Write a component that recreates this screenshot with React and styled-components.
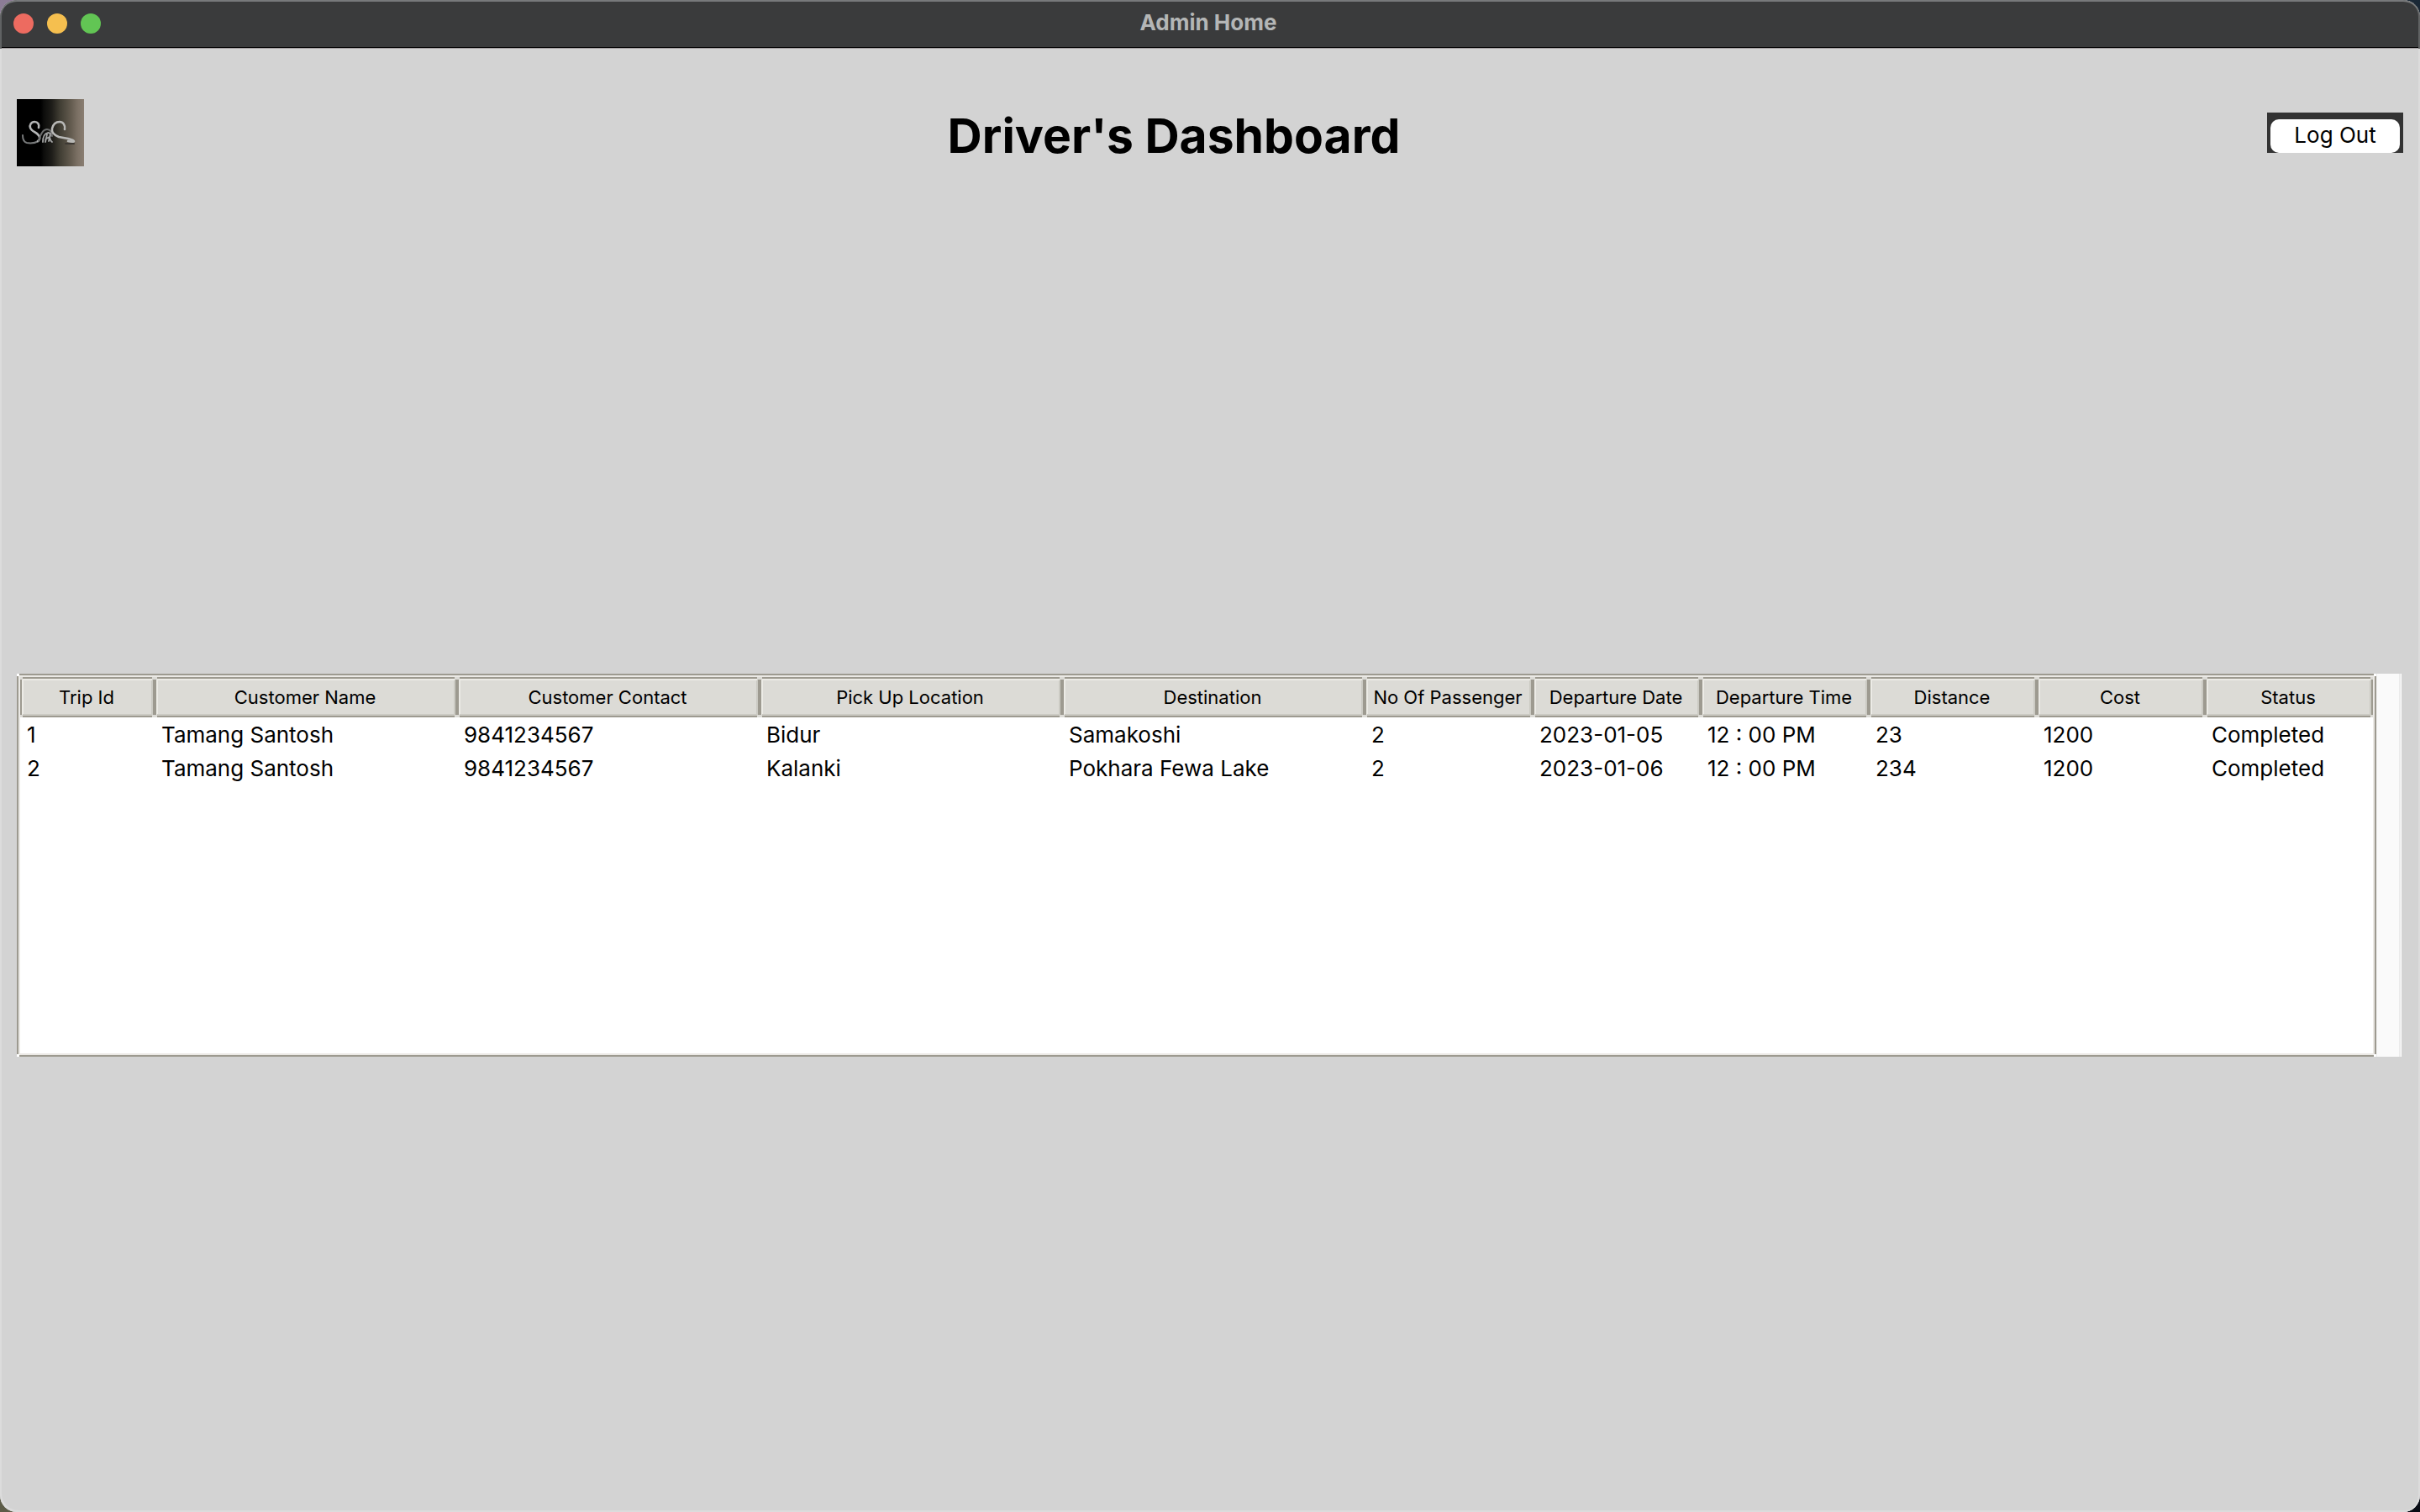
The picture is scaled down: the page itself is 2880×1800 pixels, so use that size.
import React from "react";
import styled, { createGlobalStyle, css } from "styled-components";

const colors = {
  canvas: "#d3d3d3",
  titleBar: "#3a3b3c",
  edge: "#9d9a90",
  edgeLight: "#ebe9e5",
  cell: "#dcdbd6",
  cellShade: "#cbcac3",
};

const GlobalStyle = createGlobalStyle`
  *, *::before, *::after { box-sizing: border-box; }
  html, body, #root { height: 100%; }
  body {
    margin: 0;
    font-family: Inter, "Liberation Sans", sans-serif;
    color: #000;
    background:
      linear-gradient(90deg, #8c7c96, #1a2836) top / 100% 50% no-repeat,
      linear-gradient(90deg, #5d5c48, #070b14) bottom / 100% 50% no-repeat;
  }
`;

/* Etched frame: a dark outer edge with notched corners and a paler line inside it. */
const etched = ({ corner, light, shade }) => css`
  background:
    linear-gradient(${colors.edge}, ${colors.edge}) 3px 0 / calc(100% - 6px) 2px no-repeat,
    linear-gradient(${colors.edge}, ${colors.edge}) 3px 100% / calc(100% - 6px) 2px no-repeat,
    linear-gradient(${colors.edge}, ${colors.edge}) 0 3px / 2px calc(100% - 6px) no-repeat,
    linear-gradient(${colors.edge}, ${colors.edge}) 100% 3px / 2px calc(100% - 6px) no-repeat,
    linear-gradient(${light}, ${light}) 3px 2px / calc(100% - 6px) 2px no-repeat,
    linear-gradient(${shade}, ${shade}) 3px calc(100% - 2px) / calc(100% - 6px) 2px no-repeat,
    linear-gradient(${light}, ${light}) 2px 3px / 2px calc(100% - 6px) no-repeat,
    linear-gradient(${shade}, ${shade}) calc(100% - 2px) 3px / 2px calc(100% - 6px) no-repeat,
    ${corner};
`;

const Window = styled.div`
  display: flex;
  flex-direction: column;
  min-height: 100%;
  overflow: hidden;
  border-radius: 20px;
  background: ${colors.canvas};
  box-shadow: inset 2px -2px 0 #dcdcdc, inset -2px 0 0 #dcdcdc;
`;

const TitleBar = styled.header`
  display: grid;
  grid-template-columns: 1fr auto 1fr;
  align-items: center;
  height: 58px;
  padding: 0 16px 2px;
  border-radius: 20px 20px 0 0;
  background: ${colors.titleBar};
  box-shadow: inset 0 2px 0 #77797b, inset 2px 0 0 #606263, inset -2px 0 0 #606263,
    inset 0 -1px 0 #a19c9f, inset 0 -2px 0 #000;
`;

const WindowControls = styled.div`
  display: flex;
  gap: 16px;
`;

const WindowControl = styled.button`
  width: 24px;
  height: 24px;
  padding: 0;
  border: 0;
  border-radius: 50%;
  background: ${(p) => p.$color};
`;

const WindowTitle = styled.span`
  padding: 0 4px 2px 0;
  font-size: 26px;
  line-height: 32px;
  font-weight: 700;
  color: #b4b6b6;
`;

const Banner = styled.div`
  display: flex;
  align-items: center;
  padding: 60px 20px 62px;
`;

const Logo = styled.svg`
  display: block;
  width: 80px;
  height: 80px;
`;

const Heading = styled.h1`
  flex: 1;
  margin: 0;
  padding: 8px 4px 0 0;
  font-size: 57px;
  line-height: 72px;
  font-weight: 700;
  text-align: center;
`;

const LogOutFrame = styled.div`
  padding: 8px 4px 0;
  background: #333;
`;

const LogOutButton = styled.button`
  display: block;
  width: 154px;
  height: 40px;
  padding: 0 0 2px;
  border: 0;
  border-radius: 10px;
  background: #fff;
  color: #000;
  font-family: inherit;
  font-size: 26px;
  line-height: 32px;
`;

const Main = styled.main`
  display: flex;
  flex: 1;
  align-items: center;
  padding: 0 22px 0 20px;
`;

const TripPane = styled.section`
  display: flex;
  flex: 1;
  min-height: 456px;
`;

const Viewport = styled.div`
  flex: 1;
  padding: 4px;
  ${etched({ corner: "#fff", light: colors.edgeLight, shade: colors.edgeLight })}
`;

const ScrollTrack = styled.div`
  width: 30px;
  border-left: 1px solid #ededed;
  background: #fafafa;
  box-shadow: inset -1px 0 0 #fff, inset -3px 0 0 #ebebeb;
`;

const Table = styled.table`
  width: 100%;
  table-layout: fixed;
  border-collapse: separate;
  border-spacing: 0;
`;

const Column = styled.col`
  width: ${(p) => p.$width}px;
`;

const HeadCell = styled.th`
  height: 48px;
  padding: 0 2px 0 0;
  font-size: 22px;
  line-height: 32px;
  font-weight: 400;
  text-align: center;
  white-space: nowrap;
  ${etched({ corner: colors.cell, light: "#ecebe6", shade: colors.cellShade })}
`;

const Cell = styled.td`
  height: 40px;
  padding: 2px 8px 0;
  font-size: 26px;
  line-height: 32px;
  white-space: nowrap;
`;

const columns = [
  { label: "Trip Id", width: 160 },
  { label: "Customer Name", width: 360 },
  { label: "Customer Contact", width: 360 },
  { label: "Pick Up Location", width: 360 },
  { label: "Destination", width: 360 },
  { label: "No Of Passenger", width: 200 },
  { label: "Departure Date", width: 200 },
  { label: "Departure Time", width: 200 },
  { label: "Distance", width: 200 },
  { label: "Cost", width: 200 },
  { label: "Status", width: 200 },
];

const trips = [
  ["1", "Tamang Santosh", "9841234567", "Bidur", "Samakoshi", "2", "2023-01-05", "12 : 00 PM", "23", "1200", "Completed"],
  ["2", "Tamang Santosh", "9841234567", "Kalanki", "Pokhara Fewa Lake", "2", "2023-01-06", "12 : 00 PM", "234", "1200", "Completed"],
];

function BrandLogo() {
  return (
    <Logo viewBox="0 0 80 80" role="img" aria-label="Company logo">
      <defs>
        <linearGradient id="logo-shade" x1="0" x2="1" y1="0" y2="0">
          <stop offset="0" stopColor="#000" />
          <stop offset="0.36" stopColor="#000" />
          <stop offset="0.4" stopColor="#0c0c0b" />
          <stop offset="0.52" stopColor="#1e1d19" />
          <stop offset="0.64" stopColor="#403d33" />
          <stop offset="0.8" stopColor="#625a4e" />
          <stop offset="0.9" stopColor="#7b7064" />
          <stop offset="1" stopColor="#8a7e72" />
        </linearGradient>
      </defs>
      <rect width="80" height="80" fill="url(#logo-shade)" />
      <g fill="none" strokeLinecap="round" strokeLinejoin="round">
        <path d="M58 53h10" stroke="#3c3833" strokeWidth="2" />
        <path d="M7 43c0 5 1 8 5 9 5 1 10 0 14-2" stroke="#77797a" strokeWidth="2" />
        <path d="M26 34c1-4-1-7-5-7-4 0-6 4-5 7 1 4 6 5 9 8 3 3 3 6 0 8" stroke="#b4b5b6" strokeWidth="2.6" />
        <path d="M26 50c2-8 5-14 10-14 4 0 6 4 6 8" stroke="#6b6c6c" strokeWidth="2" />
        <path d="M31 51c0-6 2-10 6-11 3 0 4 3 2 5-2 2-5 1-5 4M39 45c1 2 0 4 3 6M36 42l-2 9M40 41l-2 9" stroke="#a3a4a4" strokeWidth="1.8" />
        <path d="M57 36c1-5-2-9-6-9-5 0-8 4-9 8-1 5 3 8 8 10l11 2c4 1 7 2 7 3 0 1-3 1-7 0" stroke="#b8b8b6" strokeWidth="2.6" />
      </g>
    </Logo>
  );
}

function TripTable() {
  return (
    <Table>
      <colgroup>
        {columns.map((c) => (
          <Column key={c.label} $width={c.width} />
        ))}
      </colgroup>
      <thead>
        <tr>
          {columns.map((c) => (
            <HeadCell key={c.label} scope="col">
              {c.label}
            </HeadCell>
          ))}
        </tr>
      </thead>
      <tbody>
        {trips.map((trip) => (
          <tr key={trip[0]}>
            {trip.map((value, i) => (
              <Cell key={columns[i].label}>{value}</Cell>
            ))}
          </tr>
        ))}
      </tbody>
    </Table>
  );
}

export default function App() {
  return (
    <>
      <GlobalStyle />
      <Window>
        <TitleBar>
          <WindowControls>
            <WindowControl type="button" aria-label="Close" $color="#ed6b60" />
            <WindowControl type="button" aria-label="Minimize" $color="#f5bf4f" />
            <WindowControl type="button" aria-label="Zoom" $color="#62c554" />
          </WindowControls>
          <WindowTitle>Admin Home</WindowTitle>
        </TitleBar>
        <Banner>
          <BrandLogo />
          <Heading>Driver's Dashboard</Heading>
          <LogOutFrame>
            <LogOutButton type="button">Log Out</LogOutButton>
          </LogOutFrame>
        </Banner>
        <Main>
          <TripPane aria-label="Trips">
            <Viewport>
              <TripTable />
            </Viewport>
            <ScrollTrack />
          </TripPane>
        </Main>
      </Window>
    </>
  );
}
